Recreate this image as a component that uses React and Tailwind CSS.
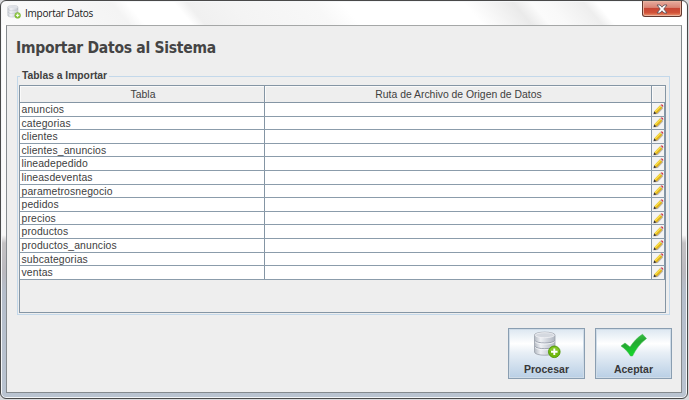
import React from "react";

const tables = [
  "anuncios", "categorias", "clientes", "clientes_anuncios", "lineadepedido",
  "lineasdeventas", "parametrosnegocio", "pedidos", "precios", "productos",
  "productos_anuncios", "subcategorias", "ventas",
];

function DatabaseIcon({ id, className }) {
  return (
    <svg viewBox="0 0 28 28" className={className}>
      <defs>
        <linearGradient id={id} x1="0" x2="1" y1="0" y2="0">
          <stop offset="0" stopColor="#b4bac3" />
          <stop offset=".3" stopColor="#eef0f4" />
          <stop offset=".6" stopColor="#d3d7de" />
          <stop offset="1" stopColor="#b0b6c1" />
        </linearGradient>
      </defs>
      <path d="M1.5 4C1.5 .2 22 .2 22 4V21C22 25.3 1.5 25.3 1.5 21Z" fill={`url(#${id})`} stroke="#9ba1ab" strokeWidth=".8" />
      <ellipse cx="11.75" cy="4.2" rx="9.6" ry="2.5" fill="#d4d8df" stroke="#f6f7f9" strokeWidth=".7" />
      <path d="M1.8 9.6C4 12.8 19.5 12.8 21.8 9.6M1.8 15.3C4 18.5 19.5 18.5 21.8 15.3" fill="none" stroke="#979daa" strokeWidth=".9" />
      <path d="M2 10.7C4 13.8 19.5 13.8 21.6 10.7M2 16.4C4 19.5 19.5 19.5 21.6 16.4" fill="none" stroke="#fafbfc" strokeWidth=".8" />
      <circle cx="21.3" cy="20.8" r="5.8" fill="#70b90e" stroke="#4e9705" strokeWidth=".9" />
      <path d="M16.5 20C17 14.5 25.6 14.5 26.1 20Z" fill="#a0d44c" opacity=".45" />
      <path d="M21.3 17.5V24.1M18 20.8H24.6" stroke="#fff" strokeWidth="1.9" />
    </svg>
  );
}

function PencilIcon() {
  return (
    <svg viewBox="0 0 10 10" className="block h-[11px] w-[11px] shrink-0">
      <path d="M.8 9.5L4.4 9.2L9.1 4.2L9 2.5L3.4 8.4Z" fill="#8b8176" opacity=".55" />
      <path d="M.4 9.4L1.2 6.4L3.4 8.6Z" fill="#3f3933" />
      <path d="M1.2 6.5L6.4 1.2L8.6 3.3L3.4 8.6Z" fill="#dfb017" />
      <path d="M1.5 6.7L6.7 1.4L7.6 2.3L2.3 7.5Z" fill="#fae24e" />
      <path d="M6.3 1.3L7 .6L9.2 2.7L8.5 3.4Z" fill="#bcc2c9" />
      <path d="M7 .7C7.8 -.3 10.1 1 9.1 2.7Z" fill="#d52b35" />
    </svg>
  );
}

function ActionButton({ label, children }) {
  return (
    <button className="flex h-[51px] w-[77px] flex-col items-center border border-[#8a9eb1] bg-[linear-gradient(180deg,#dce7f1_0%,#ffffff_30%,#e8eff6_48%,#b9cfe5_100%)] pt-[2px] text-[10.5px] font-bold leading-[14px] text-[#383838] shadow-[inset_0_0_0_1px_#cfdce8]">
      {children}
      <span className="mt-[3px]">{label}</span>
    </button>
  );
}

export default function App() {
  return (
    <div className="h-[400px] w-[689px] overflow-hidden bg-[#d8d9dc] font-['Liberation_Sans',sans-serif] text-[#404040]">
      <div className="flex h-[399px] w-[688px] flex-col rounded-[6px] border border-[#494949] bg-[linear-gradient(180deg,#ffffff_0px,#f8f8f8_234px,#c4c2c4_242px,#bab9bf_272px,#b5becb_290px,#bac4d1_398px)] px-[5px] pb-[5px] shadow-[inset_0_0_0_1px_#f4f6f8]">
        <header className="mx-[-4px] mt-px flex h-[23px] shrink-0 rounded-t-[5px] bg-[linear-gradient(50deg,#fbfbfb_0px,#f4f4f4_98px,#fff_110px,#fff_146px,#f0f0f0_156px,#f4f4f4_190px,#f8f8f8_253px,#fff_275px,#fff_368px,#eaeaea_406px,#fbfbfb_420px,#f9f9f9_433px,#eeeeee_460px,#fff_470px)] pl-[5px]">
          <DatabaseIcon id="title-db" className="mt-[3px] h-[14px] w-[14px] opacity-80" />
          <span className="ml-[4px] mt-[2px] whitespace-nowrap font-['Open_Sans',sans-serif] text-[10px] leading-[18px] tracking-[-0.22px] text-[#171717]">Importar Datos</span>
          <button className="ml-auto mr-[4px] mt-[-1px] flex h-[16px] w-[40px] items-center justify-center rounded-b-[3px] border border-t-0 border-[#62382f] bg-[linear-gradient(180deg,#e8aca0_0%,#d98575_43%,#c74534_48%,#d15238_78%,#ed9a73_100%)] shadow-[inset_0_0_0_1px_#eab4a0]">
            <svg viewBox="0 0 12 10" className="h-[10px] w-[12px]">
              <path d="M1 1H4L6 3.2L8 1H11L7.8 5L11 9H8L6 6.8L4 9H1L4.2 5Z" fill="#fff" stroke="#60545a" strokeWidth=".9" />
            </svg>
          </button>
        </header>
        <main className="flex min-h-0 flex-1 flex-col border border-[#858a8e] border-t-[#a5a7a7] bg-[#eee] px-[9px]">
          <h1 className="mt-[11px] h-[22px] whitespace-nowrap font-['DejaVu_Sans_Condensed','DejaVu_Sans',sans-serif] text-[15.5px] font-bold leading-[22px] tracking-[-0.27px] text-[#444]">Importar Datos al Sistema</h1>
          <fieldset className="ml-[1px] mt-[10px] flex h-[246px] w-[653px] min-w-0 flex-col border border-[#c3d8ea] p-0">
            <legend className="ml-[2px] h-[14px] whitespace-nowrap px-[2px] text-[10.3px] font-bold leading-[14px]">Tablas a Importar</legend>
            <div className="ml-[1px] mt-[2px] flex h-[228px] w-[647px] flex-col border border-[#8495a4] text-[10.4px]">
              <div className="flex h-[17px] shrink-0 border-b border-[#8495a4] text-center leading-[18px] shadow-[inset_1px_1px_0_#fafafa]">
                <span className="w-[245px] border-r border-[#8495a4] pl-[30px] pr-[28px]">Tabla</span>
                <span className="w-[387px] border-r border-[#8495a4] pl-[1px] shadow-[inset_1px_0_0_#fafafa]">Ruta de Archivo de Origen de Datos</span>
                <span className="flex-1 shadow-[inset_1px_0_0_#fafafa]" />
              </div>
              {tables.map((name) => (
                <div key={name} className="flex h-[13.6px] shrink-0 border-b border-[#8b9cab] bg-white leading-[14px]">
                  <span className="w-[245px] border-r border-[#8495a4] pl-[1.5px] tracking-[0.13px]">{name}</span>
                  <span className="w-[387px] border-r border-[#8495a4]" />
                  <span className="flex flex-1 items-center justify-center overflow-hidden border-r border-[#8495a4] bg-[#f4f4f4]"><PencilIcon /></span>
                </div>
              ))}
            </div>
          </fieldset>
          <div className="mt-[13px] flex justify-end gap-[10px]">
            <ActionButton label="Procesar">
              <DatabaseIcon id="button-db" className="h-[28px] w-[28px]" />
            </ActionButton>
            <ActionButton label="Aceptar">
              <svg viewBox="0 0 28 28" className="h-[28px] w-[28px]">
                <defs>
                  <linearGradient id="check-green" x1="0" y1="0" x2=".3" y2="1">
                    <stop offset="0" stopColor="#45cf54" /><stop offset=".5" stopColor="#25a932" /><stop offset="1" stopColor="#12d82b" />
                  </linearGradient>
                </defs>
                <path d="M1 15L5 12L10 16C13.5 10.5 17.5 6.5 22.5 3.2L26.5 7.5C20 12.5 16 18 12.5 25H10.5C8 20.8 4.5 17.2 1 15Z" fill="url(#check-green)" stroke="#36b743" strokeWidth=".5" />
              </svg>
            </ActionButton>
          </div>
        </main>
      </div>
    </div>
  );
}
